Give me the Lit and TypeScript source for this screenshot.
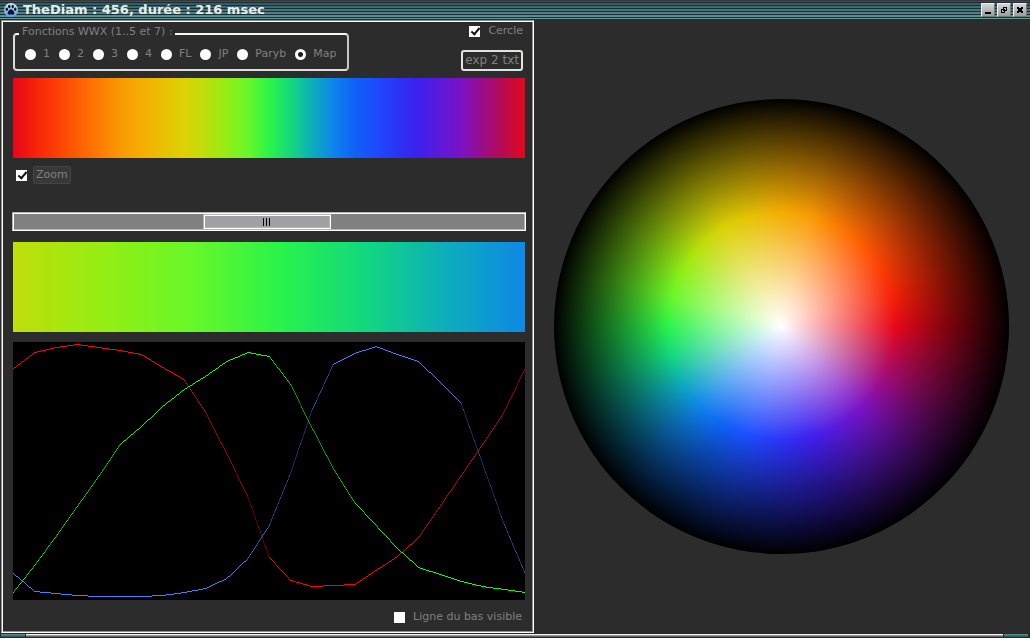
import { LitElement, html, css, svg } from "lit";
import { customElement, state } from "lit/decorators.js";
import { styleMap } from "lit/directives/style-map.js";

type Rgb = [number, number, number];

// Colour map, one value for each 1/24 of the hue circle.
const RED = [231, 247, 252, 255, 252, 249, 245, 232, 220, 188, 146, 103, 42, 19, 13, 14, 15, 29, 43, 62, 93, 124, 155, 187, 231];
const GREEN = [7, 34, 63, 93, 123, 155, 173, 193, 210, 223, 238, 247, 243, 215, 172, 131, 97, 74, 51, 32, 25, 18, 13, 10, 7];
const BLUE = [26, 8, 6, 4, 3, 3, 3, 4, 7, 11, 21, 41, 74, 126, 189, 235, 246, 253, 245, 238, 217, 196, 136, 76, 26];

const sample = (table: number[], t: number): number => {
  const p = Math.min(Math.max(t, 0), 1) * (table.length - 1);
  const i = Math.min(Math.floor(p), table.length - 2);
  return table[i] + (table[i + 1] - table[i]) * (p - i);
};

const colorAt = (t: number): Rgb => [sample(RED, t), sample(GREEN, t), sample(BLUE, t)];
const rgb = (c: Rgb) => `rgb(${c.map(Math.round).join(",")})`;

const bands = (from: number, to: number, count: number): string => {
  const stops: string[] = [];
  for (let i = 0; i < count; i++) {
    const c = rgb(colorAt(from + ((to - from) * i) / count));
    stops.push(`${c} ${(i * 100) / count}% ${((i + 1) * 100) / count}%`);
  }
  return `linear-gradient(to right, ${stops.join(",")})`;
};

const wheel = (): string => {
  const stops = RED.map((_, i) => rgb(colorAt(1 - i / 24)));
  return (
    "radial-gradient(closest-side, #fff, rgba(255,255,255,0) 50%, rgba(0,0,0,0) 50%, #000 100%)," +
    `conic-gradient(from 90deg, ${stops.join(",")})`
  );
};

const PLOT_W = 512;
const PLOT_H = 258;

// One vertical run per column; the longer the run, the fainter its ink.
const curve = (table: number[], color: string) => {
  const runs = new Map<number, string>();
  const row = (x: number) => Math.round(PLOT_H - 1 - sample(table, x / PLOT_W));
  for (let x = 0; x < PLOT_W; x++) {
    const a = row(x);
    const b = row(x + 1);
    const len = Math.max(1, Math.abs(b - a));
    const top = b >= a ? a : b + 1;
    runs.set(len, (runs.get(len) ?? "") + `M${x} ${top}h1v${len}h-1z`);
  }
  return [...runs].map(
    ([len, d]) => svg`<path d=${d} fill=${color} fill-opacity=${len === 1 ? 1 : len === 2 ? 0.6 : 0.36}></path>`
  );
};

const MODES = ["1", "2", "3", "4", "FL", "JP", "Paryb", "Map"];

@customElement("app-root")
export class AppRoot extends LitElement {
  @state() private mode = "Map";
  @state() private offset = 190;

  static styles = css`
    :host {
      display: flex;
      flex-direction: column;
      min-height: 100vh;
      box-sizing: border-box;
      background: #2c2c2c;
      color: #808080;
      font: 11px/14px "DejaVu Sans", sans-serif;
    }
    .title {
      display: flex;
      align-items: center;
      height: 20px;
      box-sizing: border-box;
      padding: 0 3px 0 4px;
      border-top: 1px solid #3a3638;
      border-bottom: 1px solid #2a2a2a;
      background:
        repeating-linear-gradient(transparent 0 1px, #1b2f37 1px 2px, transparent 2px 3px),
        linear-gradient(#2c5058, #659a9c);
    }
    .title h1 {
      flex: 1;
      margin: 0 0 0 5px;
      color: #e6eeea;
      font-size: 13px;
      line-height: 18px;
      font-weight: bold;
    }
    .logo { width: 14px; height: 14px; }
    .winbtns { display: flex; gap: 2px; }
    .winbtn {
      width: 14px;
      height: 14px;
      padding: 0;
      border: 1px solid;
      border-color: #f0f0f0 #777 #777 #f0f0f0;
      background: linear-gradient(#d4d4d4, #9c9c9c);
    }
    .winbtn svg { display: block; width: 12px; height: 12px; }
    .body {
      flex: 1;
      display: grid;
      grid-template-columns: minmax(0, 534fr) minmax(0, 496fr);
    }
    .panel {
      display: flex;
      flex-direction: column;
      margin-left: 1px;
      padding: 3px 8px 8px 11px;
      border: 1px solid;
      border-color: #909090 #fff #fff #909090;
      box-shadow: inset 1px 1px #fff, inset -1px -1px #909090;
    }
    .top {
      display: flex;
      justify-content: space-between;
      align-items: flex-start;
    }
    .modes {
      display: flex;
      align-items: center;
      gap: 9px;
      height: 46px;
      box-sizing: border-box;
      margin: 1px 0 0;
      padding: 0 11px 4px 10px;
      border: 2px solid;
      border-color: #f6f6f6 #c4c8c4 #dde0dd #d8dcd8;
      border-radius: 4px;
    }
    .modes legend { padding: 0 2px 4px 3px; margin-left: -6px; }
    .radio { display: flex; align-items: center; gap: 7px; }
    .check { display: flex; align-items: center; gap: 8px; }
    input[type="radio"] {
      appearance: none;
      width: 11px;
      height: 11px;
      margin: 0;
      border-radius: 50%;
      background: #fff;
    }
    input[type="radio"]:checked {
      background: radial-gradient(circle, #1c1c1c 2px, #fff 3px);
    }
    input[type="checkbox"] {
      appearance: none;
      width: 11px;
      height: 11px;
      margin: 0;
      background: #fff;
      position: relative;
    }
    input[type="checkbox"]:checked::after {
      content: "";
      position: absolute;
      left: 4px;
      top: 0;
      width: 3px;
      height: 7px;
      border: solid #111;
      border-width: 0 2px 2px 0;
      transform: rotate(40deg);
    }
    .side {
      display: flex;
      flex-direction: column;
      align-items: flex-end;
      gap: 12px;
      padding-right: 2px;
    }
    .export {
      height: 21px;
      padding: 0 2px;
      border: 2px solid #dfe4df;
      border-radius: 3px;
      background: #2c2c2c;
      color: #808080;
      font: 12px/15px "DejaVu Sans", sans-serif;
    }
    .spectrum { height: 80px; margin-top: 7px; }
    .zoomrow { margin: 8px 0 28px 3px; gap: 6px; }
    .tag {
      padding: 1px 2px;
      border: 1px solid #444;
      border-radius: 2px;
      background: #383838;
      line-height: 14px;
    }
    .scroll {
      appearance: none;
      display: block;
      box-sizing: border-box;
      width: calc(100% + 2px);
      height: 19px;
      margin: 0 -1px;
      padding: 1px;
      border: 1px solid;
      border-color: #b4b4b4 #fff #fff #b4b4b4;
      box-shadow: inset 1px 1px #fff, inset -1px -1px #b4b4b4;
      background: #808080;
    }
    .scroll::-webkit-slider-thumb {
      appearance: none;
      box-sizing: border-box;
      width: 128px;
      height: 15px;
      border: 1px solid;
      border-color: #b4b4b4 #fff #fff #b4b4b4;
      box-shadow: inset 1px 1px #fff, inset -1px -1px #b4b4b4;
      background:
        linear-gradient(#000, #000) 59px 3px / 1px 8px no-repeat,
        linear-gradient(#000, #000) 62px 3px / 1px 8px no-repeat,
        linear-gradient(#000, #000) 65px 3px / 1px 8px no-repeat,
        #a0a0a4;
    }
    .detail { height: 90px; margin: 11px 0 10px; }
    .plot { display: block; width: 100%; height: 258px; background: #000; }
    .foot { display: flex; justify-content: flex-end; margin: 10px 3px 0 0; }
    .view { display: grid; place-items: center; padding-right: 1px; }
    .wheel {
      width: calc(100% - 40px);
      aspect-ratio: 1;
      border-radius: 50%;
    }
    .resize {
      display: flex;
      gap: 1px;
      height: 5px;
      box-sizing: border-box;
      padding: 1px 2px 1px 1px;
      background: #2a2829;
    }
    .corner { width: 24px; background: linear-gradient(#5f9498, #2c4c52); }
    .edge { flex: 1; background: linear-gradient(#f4f4f8 0 1px, #98989c 1px 2px, #606468 2px); }
  `;

  private check(id: string, label: string, on: boolean, row = "", tag = "") {
    return html`<div class="check ${row}">
      <input type="checkbox" id=${id} .checked=${on} /><label class=${tag} for=${id}>${label}</label>
    </div>`;
  }

  render() {
    const from = (this.offset / 384) * 0.75;
    return html`
      <header class="title">
        <svg class="logo" viewBox="0 0 14 14" aria-hidden="true">
          <defs>
            <linearGradient id="g" x1="0" y1="0" x2="0" y2="1">
              <stop offset="0" stop-color="#dce8f4"></stop>
              <stop offset="1" stop-color="#5f9bea"></stop>
            </linearGradient>
          </defs>
          <circle cx="7" cy="7" r="7" fill="url(#g)"></circle>
          <g fill="#0b1626">
            <ellipse cx="2.8" cy="6.3" rx="1.2" ry="1.7"></ellipse>
            <ellipse cx="5.3" cy="3.6" rx="1.2" ry="1.8"></ellipse>
            <ellipse cx="8.7" cy="3.6" rx="1.2" ry="1.8"></ellipse>
            <ellipse cx="11.2" cy="6.3" rx="1.2" ry="1.7"></ellipse>
            <path d="M7 6.3c1.8 0 3.4 2.4 3.4 4 0 1.8-2 1.3-3.4 1.3s-3.4.5-3.4-1.3c0-1.6 1.6-4 3.4-4z"></path>
          </g>
        </svg>
        <h1>TheDiam : 456, durée : 216 msec</h1>
        <div class="winbtns">
          <button class="winbtn" aria-label="Réduire">
            <svg viewBox="0 0 12 12" shape-rendering="crispEdges"><path d="M3 8h6v2H3z"></path></svg>
          </button>
          <button class="winbtn" aria-label="Restaurer">
            <svg viewBox="0 0 12 12" shape-rendering="crispEdges" fill="none" stroke="#000">
              <path d="M5.5 3.5h3v3h-3zM3.5 5.5h3v3h-3z"></path>
            </svg>
          </button>
          <button class="winbtn" aria-label="Fermer">
            <svg viewBox="0 0 12 12" shape-rendering="crispEdges">
              <path d="M3 3h2v1h2v-1h2v2h-1v2h1v2h-2v-1h-2v1h-2v-2h1v-2h-1z"></path>
            </svg>
          </button>
        </div>
      </header>
      <main class="body">
        <section class="panel">
          <div class="top">
            <fieldset class="modes">
              <legend>Fonctions WWX (1..5 et 7) :</legend>
              ${MODES.map(
                (m) => html`<label class="radio">
                  <input type="radio" name="mode" .checked=${m === this.mode} @change=${() => (this.mode = m)} />${m}
                </label>`
              )}
            </fieldset>
            <div class="side">
              ${this.check("circle", "Cercle", true)}
              <button class="export">exp 2 txt</button>
            </div>
          </div>
          <div class="spectrum" style=${styleMap({ background: bands(0, 1, 256) })}></div>
          ${this.check("zoom", "Zoom", true, "zoomrow", "tag")}
          <input
            class="scroll"
            type="range"
            min="0"
            max="384"
            aria-label="Zoom"
            .value=${String(this.offset)}
            @input=${(e: Event) => (this.offset = Number((e.target as HTMLInputElement).value))}
          />
          <div class="detail" style=${styleMap({ background: bands(from, from + 0.25, 128) })}></div>
          <svg
            class="plot"
            viewBox="0 0 ${PLOT_W} ${PLOT_H}"
            preserveAspectRatio="none"
            shape-rendering="crispEdges"
          >
            ${curve(BLUE, "#4080ff")}${curve(RED, "#ff0000")}${curve(GREEN, "#00ff00")}
          </svg>
          <div class="foot">${this.check("line", "Ligne du bas visible", false)}</div>
        </section>
        <section class="view">
          <div class="wheel" style=${styleMap({ background: wheel() })}></div>
        </section>
      </main>
      <footer class="resize"><span class="corner"></span><span class="edge"></span><span class="corner"></span></footer>
    `;
  }
}
